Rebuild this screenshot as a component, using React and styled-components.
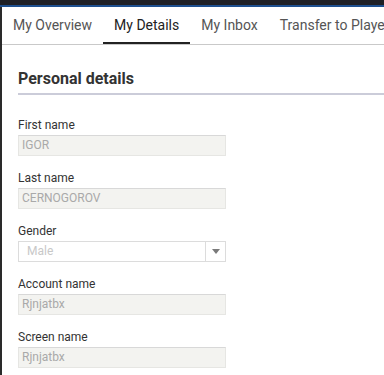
import React from "react";
import styled, { createGlobalStyle } from "styled-components";

const GlobalStyle = createGlobalStyle`
  html, body { margin: 0; padding: 0; background: #fff; }
  body { font-family: Roboto, "Liberation Sans", Arial, sans-serif; }
`;

const TopStrip = styled.div`
  height: 5px;
  background: #1e1f25;
  border-bottom: 2px solid #1d4f8f;
`;

const Frame = styled.div`
  border-left: 2px solid #2a2a2a;
  min-height: calc(100vh - 7px);
  overflow: hidden;
`;

const TabBar = styled.nav`
  display: flex;
  height: 37px;
  border-bottom: 1px solid #c9c9c9;
  white-space: nowrap;
  overflow: hidden;
`;

const Tab = styled.div`
  flex: none;
  padding: 0 11px;
  line-height: 37px;
  font-size: 14px;
  color: ${(p) => (p.$active ? "#222" : "#555")};
  box-shadow: ${(p) => (p.$active ? "inset 0 -2px 0 #222" : "none")};
`;

const Content = styled.main`
  padding: 24px 0 0 16px;
`;

const Heading = styled.h2`
  margin: 0 0 22px;
  font-size: 16px;
  font-weight: 700;
  line-height: 20px;
  color: #333;
  padding-bottom: 4px;
  border-bottom: 2px solid #cbccd9;
`;

const Field = styled.div`
  margin-bottom: 14px;
`;

const Label = styled.div`
  font-size: 12px;
  line-height: 16px;
  color: #333;
  margin-bottom: 2px;
`;

const Input = styled.div`
  box-sizing: border-box;
  width: 208px;
  height: 21px;
  padding: 0 3px;
  background: #f3f3f0;
  border: 1px solid #e6e6e3;
  border-top-color: #d8d8d8;
  font-size: 12px;
  line-height: 19px;
  color: #a9a9a9;
`;

const Select = styled.div`
  box-sizing: border-box;
  width: 208px;
  height: 21px;
  display: flex;
  background: #fff;
  border: 1px solid #dcdcdc;
  font-size: 12px;
  line-height: 19px;
  color: #c8c8c8;
`;

const SelectValue = styled.span`
  flex: 1;
  padding-left: 8px;
`;

const Arrow = styled.span`
  flex: none;
  width: 19px;
  border-left: 1px solid #dcdcdc;
  display: flex;
  align-items: center;
  justify-content: center;
  &::after {
    content: "";
    border-left: 4px solid transparent;
    border-right: 4px solid transparent;
    border-top: 5px solid #7a7a7a;
  }
`;

const tabs = ["My Overview", "My Details", "My Inbox", "Transfer to Player"];
const fields = [
  ["First name", "IGOR"],
  ["Last name", "CERNOGOROV"],
  ["Gender", "Male", true],
  ["Account name", "Rjnjatbx"],
  ["Screen name", "Rjnjatbx"],
];

export default function App() {
  return (
    <>
      <GlobalStyle />
      <TopStrip />
      <Frame>
        <TabBar>
          {tabs.map((t) => (
            <Tab key={t} $active={t === "My Details"}>
              {t}
            </Tab>
          ))}
        </TabBar>
        <Content>
          <Heading>Personal details</Heading>
          {fields.map(([label, value, isSelect]) => (
            <Field key={label}>
              <Label>{label}</Label>
              {isSelect ? (
                <Select>
                  <SelectValue>{value}</SelectValue>
                  <Arrow />
                </Select>
              ) : (
                <Input>{value}</Input>
              )}
            </Field>
          ))}
        </Content>
      </Frame>
    </>
  );
}
